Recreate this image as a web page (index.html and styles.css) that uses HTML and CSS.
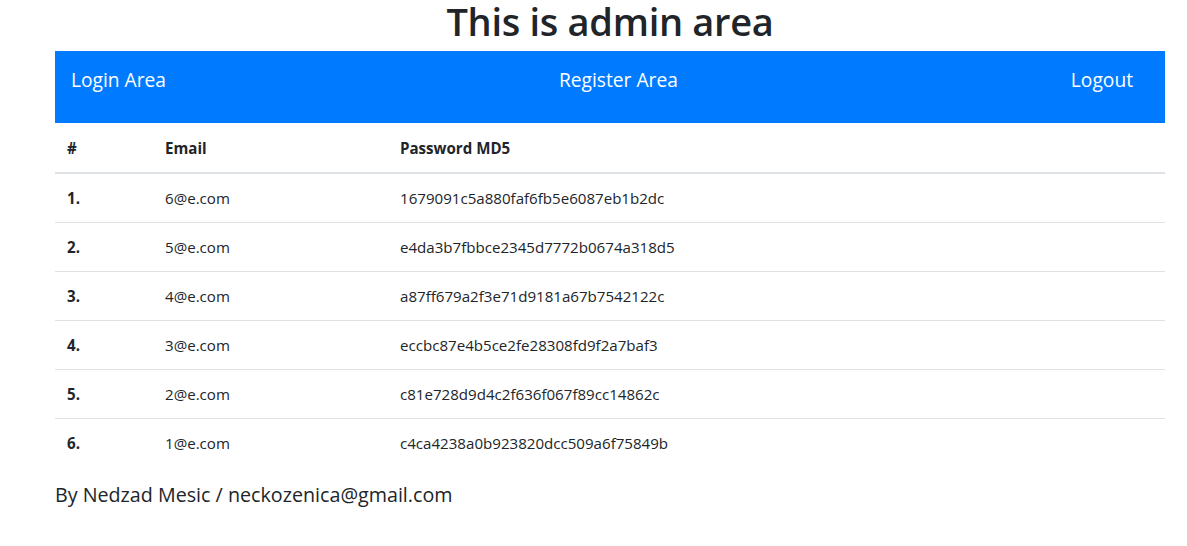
FILE: index.html
```html
<!DOCTYPE html>
<html lang="en">
<head>
<meta charset="utf-8">
<title>Admin area</title>
<link rel="stylesheet" href="styles.css">
</head>
<body>
<div class="page">
  <h1 class="title">This is admin area</h1>
  <nav class="nav">
    <a class="nav-link" href="#">Login Area</a>
    <a class="nav-link" href="#">Register Area</a>
    <a class="nav-link" href="#">Logout</a>
  </nav>
  <table class="users">
    <thead>
      <tr><th class="c-num">#</th><th class="c-email">Email</th><th>Password MD5</th></tr>
    </thead>
    <tbody>
      <tr><th>1.</th><td>6@e.com</td><td>1679091c5a880faf6fb5e6087eb1b2dc</td></tr>
      <tr><th>2.</th><td>5@e.com</td><td>e4da3b7fbbce2345d7772b0674a318d5</td></tr>
      <tr><th>3.</th><td>4@e.com</td><td>a87ff679a2f3e71d9181a67b7542122c</td></tr>
      <tr><th>4.</th><td>3@e.com</td><td>eccbc87e4b5ce2fe28308fd9f2a7baf3</td></tr>
      <tr><th>5.</th><td>2@e.com</td><td>c81e728d9d4c2f636f067f89cc14862c</td></tr>
      <tr><th>6.</th><td>1@e.com</td><td>c4ca4238a0b923820dcc509a6f75849b</td></tr>
    </tbody>
  </table>
  <h5 class="footer">By Nedzad Mesic / neckozenica@gmail.com</h5>
</div>
</body>
</html>
```
FILE: styles.css
```css
html, body {
  margin: 0;
  padding: 0;
  background: #fff;
}
body {
  font-family: "Open Sans", "Noto Sans", sans-serif;
  color: #212529;
  font-size: 15px;
  line-height: 1.5;
}
.page {
  width: 1110px;
  margin-left: 55px;
}
.title {
  margin: 0 0 11px 0;
  padding-top: 2px;
  font-size: 38px;
  font-weight: 600;
  line-height: 38px;
  text-align: center;
  letter-spacing: -0.3px;
}
.nav {
  display: flex;
  justify-content: space-between;
  align-items: flex-start;
  background: #007bff;
  height: 72px;
  box-sizing: border-box;
  padding: 14px 16px 0 0;
}
.nav-link {
  color: #fff;
  text-decoration: none;
  font-size: 19.2px;
  line-height: 30px;
  padding: 0 16px;
}
.users {
  width: 100%;
  border-collapse: collapse;
  margin-bottom: 16px;
}
.users th, .users td {
  padding: 12px;
  line-height: 24px;
  text-align: left;
  vertical-align: top;
  border-top: 1px solid #dee2e6;
  font-size: 15.1px;
}
.users thead th {
  border-top: none;
  border-bottom: 2px solid #dee2e6;
  font-weight: 700;
  padding-top: 13px;
}
.users tbody th {
  font-weight: 700;
}
.users tbody tr:first-child th,
.users tbody tr:first-child td {
  border-top: none;
}
.c-num {
  width: 74px;
}
.c-email {
  width: 211px;
}
.footer {
  margin: 0;
  font-size: 19.7px;
  font-weight: 500;
  line-height: 24px;
}
```
